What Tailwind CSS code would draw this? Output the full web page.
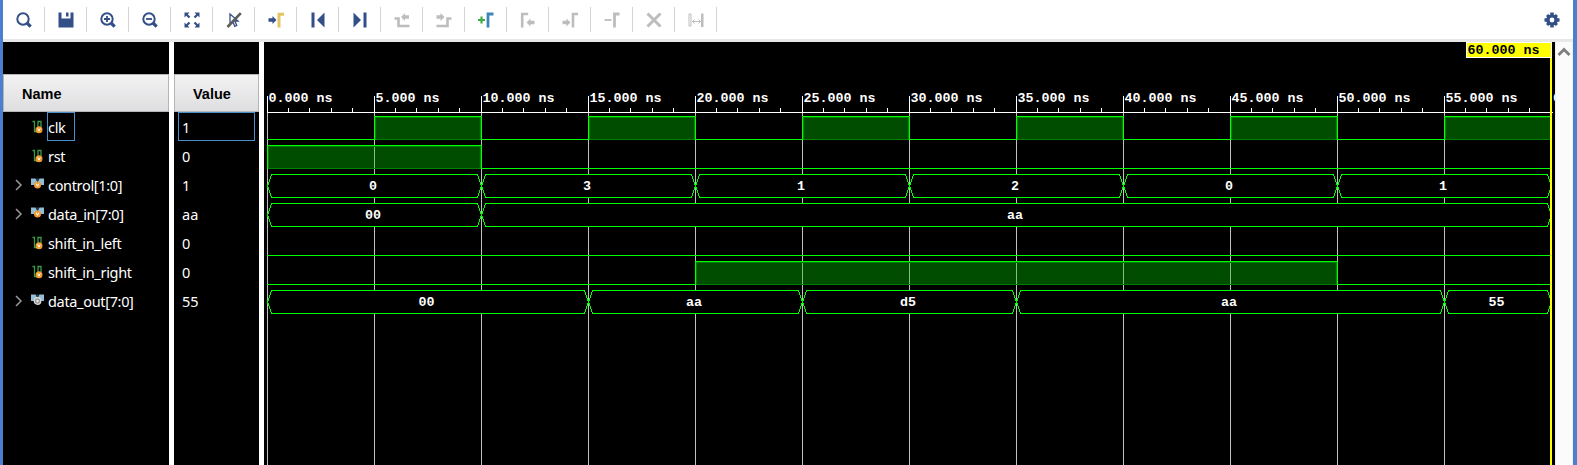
<!DOCTYPE html>
<html lang="en">
<head>
<meta charset="utf-8">
<title>Waveform</title>
<script src="https://cdn.jsdelivr.net/npm/@tailwindcss/browser@4"></script>
</head>
<body class="w-[1577px] h-[465px] overflow-hidden bg-white">
<div class="flex h-[465px] flex-col border-l-[3px] border-r-4 border-[#4a7fd0]">
  <header class="flex h-[42px] shrink-0 items-center border-b-[3px] border-[#e8e8e8] bg-white">
    <div id="tools" class="flex items-center"></div>
    <svg class="ml-auto mr-[13px]" width="16" height="16" viewBox="0 0 16 16"><g fill="#334f87"><circle cx="8" cy="8" r="5.8"/><path d="M6.300 .5h3.400v15H6.300zM.5 6.300h15v3.400H.5z"/><path d="M6.500 1h3v14h-3zM1 6.500h14v3H1z" transform="rotate(45 8 8)"/></g><circle cx="8" cy="8" r="2.4" fill="#fff"/></svg>
  </header>
  <main class="flex min-h-0 flex-1 bg-white font-['Noto_Sans',sans-serif] text-[14.5px] text-white">
    <section class="w-[166px] bg-black pt-8">
      <div class="flex h-[38px] items-center border border-[#b5b5b5] bg-linear-to-b from-[#f3f3f4] to-[#dedee0] pl-[18px] pt-[3px] font-['Liberation_Sans',sans-serif] text-[14.5px] font-bold text-black">Name</div>
      <div id="names" class="tracking-[-0.33px]"></div>
    </section>
    <section class="ml-[5px] w-[85px] bg-black pt-8">
      <div class="flex h-[38px] items-center border border-[#b5b5b5] bg-linear-to-b from-[#f3f3f4] to-[#dedee0] pl-[18px] pt-[3px] font-['Liberation_Sans',sans-serif] text-[14.5px] font-bold text-black">Value</div>
      <div id="values"></div>
    </section>
    <section class="ml-[5px] w-[1291px] bg-black">
      <svg id="wave" class="block font-['Liberation_Mono',monospace] text-[13.33px] font-bold" width="1291" height="423" viewBox="264 42 1291 423" shape-rendering="crispEdges"></svg>
    </section>
    <aside class="flex flex-1 justify-center border-x border-[#eee] bg-[#fbfbfb]">
      <svg class="mt-[5px]" width="14" height="10" viewBox="0 0 14 10"><path d="M1.500 8l5.500-5.500 5.500 5.500" fill="none" stroke="#7d7d7d" stroke-width="2.8"/></svg>
    </aside>
  </main>
</div>
<script>
const B = '#334f87', G = '#bdbdbd';
const arrow = (x, y, c) => `<path fill="${c}" d="M${x} ${y-1.8}h4v-2.2l4 4-4 4v-2.2h-4z"/>`;
const arrowL = (x, y, c) => `<path fill="${c}" d="M${x+8} ${y-1.8}h-4v-2.2l-4 4 4 4v-2.2h4z"/>`;
const lens = `<circle cx="7" cy="7" r="5.700" fill="none" stroke="${B}" stroke-width="2"/><path d="M11 11l3.700 3.700" stroke="${B}" stroke-width="3.200"/>`;
const tools = [
  lens,
  `<path fill="${B}" d="M.5 .5h3v6h9v-6h3v15H.5z"/><path fill="${B}" d="M8 .5h2.5v4H8z"/>`,
  lens + `<path d="M4 7h6M7 4v6" stroke="${B}" stroke-width="1.8"/>`,
  lens + `<path d="M4 7h6" stroke="${B}" stroke-width="1.8"/>`,
  `<path fill="${B}" d="M.5 .5h5l-1.700 1.700 2.500 2.500-1.600 1.600-2.500-2.500L.5 5.500zM15.500 .5h-5l1.700 1.700-2.500 2.500 1.600 1.600 2.500-2.500 1.700 1.700zM.5 15.500h5l-1.700-1.700 2.500-2.500-1.600-1.600-2.500 2.500-1.700-1.700zM15.500 15.500h-5l1.700-1.700-2.500-2.500 1.600-1.600 2.500 2.500 1.700-1.700z"/>`,
  `<path d="M4 2l8 7H8.800l2 4.500-2 .8-1.800-4.300L4 12z" fill="#fff" stroke="${B}" stroke-width="1.300"/><path d="M1.500 15L14.800 1.200" stroke="#5c5c5c" stroke-width="2.600"/>`,
  arrow(.5, 8, B) + `<path d="M11 15.500v-13.300h5" fill="none" stroke="#e3c565" stroke-width="3"/>`,
  `<path fill="${B}" d="M1.500 .5h3v15h-3zM14.500 .5v15L7 8z"/>`,
  `<path fill="${B}" d="M11.500 .5h3v15h-3zM1.500 .5v15L9 8z"/>`,
  `<path d="M.5 6.500h4v7.500h11" fill="none" stroke="${G}" stroke-width="2.600"/>` + arrowL(7, 5, G),
  `<path d="M15.500 6.500h-4v7.500H.5" fill="none" stroke="${G}" stroke-width="2.600"/>` + arrow(.5, 5, G),
  `<path d="M0 8h7M3.500 4.500v7" stroke="#41ae45" stroke-width="2.200"/><path d="M10 15.500v-13.500h5.500" fill="none" stroke="#3c86b8" stroke-width="2.800"/>`,
  `<path d="M2.200 15.500v-13.500h6" fill="none" stroke="${G}" stroke-width="2.600"/>` + arrowL(6.500, 10.500, G),
  arrow(.5, 10.500, G) + `<path d="M11 15.500v-13.500h5" fill="none" stroke="${G}" stroke-width="2.600"/>`,
  `<path d="M.5 8h7" stroke="${G}" stroke-width="1.800"/><path d="M10.500 15.500v-13.500h5" fill="none" stroke="${G}" stroke-width="2.800"/>`,
  `<path d="M1.500 1.500l13 13M14.500 1.500l-13 13" stroke="${G}" stroke-width="3"/>`,
  `<path d="M1 2h2v12H1z" fill="none" stroke="${G}"/><path d="M13 1.500h2.500v13.500H13z" fill="${G}"/><path d="M4.500 9.500h8M6.500 7.500l-2 2 2 2M10.500 7.500l2 2-2 2" fill="none" stroke="${G}"/>`
];
document.getElementById('tools').innerHTML = tools.map(t =>
  `<div class="flex h-[25px] w-[42px] items-center justify-center border-r border-[#d4d4d4]"><svg width="16" height="16" viewBox="0 0 16 16">${t}</svg></div>`).join('');

const badge = (x, y, out) => out
  ? `<circle cx="${x}" cy="${y}" r="3.300" fill="#999" stroke="#ddd" stroke-width="1.200"/><circle cx="${x}" cy="${y}" r="1.200" fill="#eee"/>`
  : `<circle cx="${x}" cy="${y}" r="3.500" fill="#f29a2e"/><path d="M${x-1.300} ${y-1.400}l1.300 2.800 1.300-2.800" fill="none" stroke="#fff"/>`;
const wire = `<path d="M1.500 1.500h2v10h3M7 8v-6.500h3v6" fill="none" stroke="#3c9a48" stroke-width="1.300"/>` + badge(8, 9.700);
const bus = out => `<path d="M0 .5h4.500l2 3.500L8.500 .5H13v6.500h-3L6.500 5 3 7H0z" fill="#92bdd6"/><path d="M4.500 .5h4L6.500 4z" fill="#2c3f49"/>` + badge(6.500, 7, out);
const signals = [
  ['clk', '1', 0], ['rst', '0', 0], ['control[1:0]', '1', 1], ['data_in[7:0]', 'aa', 1],
  ['shift_in_left', '0', 0], ['shift_in_right', '0', 0], ['data_out[7:0]', '55', 2]];
document.getElementById('names').innerHTML = signals.map(([n, v, k], i) =>
  `<div class="flex h-[29px] items-center pl-[11px]">
    <svg width="10" height="12" viewBox="0 0 10 12">${k ? '<path d="M2 1l5 5-5 5" fill="none" stroke="#999" stroke-width="1.500"/>' : ''}</svg>
    <svg class="ml-[7px]" width="14" height="14" viewBox="0 0 14 14">${k ? bus(k === 2) : wire}</svg>
    <span class="ml-[2px] flex h-[29px] items-center border pt-[2px] pr-[9px] ${i ? 'border-transparent' : 'border-[#4a90cc]'}">${n}</span></div>`).join('');
document.getElementById('values').innerHTML = signals.map(([n, v], i) =>
  `<div class="ml-1 mr-1 flex h-[29px] items-center border pl-[3px] pt-[2px] ${i ? 'border-transparent' : 'border-[#4a90cc]'}">${v}</div>`).join('');

const X = t => 267 + t * 21.4;
const rect = (x, y, w, h, c) => `<rect x="${x}" y="${y}" width="${w}" height="${h}" fill="${c}"/>`;
const L = '#00ff00';
let s = '';
for (let i = 0; i < 12; i++) s += rect(267 + 107 * i, 113, 1, 352, '#c0c0c0');
const drawBit = (y, segs) => {
  segs.forEach(([a, b, hi]) => {
    const x = Math.round(X(a)), w = Math.round(X(b)) - x;
    if (hi) {
      s += rect(x, y, w, 24, '#004d00');
      for (let t = a + 5; t < b; t += 5) s += rect(Math.round(X(t)), y, 1, 24, '#80c080');
      s += `<rect x="${x + 1.5}" y="${y + 1.500}" width="${w - 2}" height="22" fill="none" stroke="#008000"/>`;
      s += rect(x, y, w, 1, L) + rect(x, y, 1, 24, L);
      if (b < 60) s += rect(x + w, y, 1, 24, L);
    } else s += rect(x, y + 23, w + 1, 1, L);
  });
};
const drawBus = (y, segs) => {
  segs.forEach(([a, b, v]) => {
    const x = Math.round(X(a)) + .5, e = Math.round(X(b)) + .5;
    s += `<path d="M${x} ${y + 12}L${x + 4} ${y + .5}H${e - 4}L${e} ${y + 12}L${e - 4} ${y + 23.500}H${x + 4}Z" fill="#000" stroke="${L}"/>`;
    s += `<text x="${(x + e) / 2 - 1.500}" y="${y + 16}" text-anchor="middle" fill="#fff">${v}</text>`;
  });
};
drawBit(116, [...Array(12)].map((_, i) => [i * 5, i * 5 + 5, i % 2]));
drawBit(145, [[0, 10, 1], [10, 60, 0]]);
drawBus(174, [[0, 10, '0'], [10, 20, '3'], [20, 30, '1'], [30, 40, '2'], [40, 50, '0'], [50, 60, '1']]);
drawBus(203, [[0, 10, '00'], [10, 60, 'aa']]);
drawBit(232, [[0, 60, 0]]);
drawBit(261, [[0, 20, 0], [20, 50, 1], [50, 60, 0]]);
drawBus(290, [[0, 15, '00'], [15, 25, 'aa'], [25, 35, 'd5'], [35, 55, 'aa'], [55, 60, '55']]);
s += rect(267, 112, 1286, 1, '#fff');
for (let i = 0; i < 60; i++) {
  const x = Math.floor(X(i) + .01);
  s += i % 5 ? rect(x, 108, 1, 4, '#fff') : rect(x, 96, 1, 17, '#fff') + `<text x="${x + 1.500}" y="102" fill="#fff">${i}.000 ns</text>`;
}
s += `<text x="1553" y="102" fill="#fff">60.000 ns</text>`;
s += rect(1550, 42, 2, 423, '#ff0');
s += rect(1466, 42, 86, 16, '#fff') + rect(1467, 43, 84, 14, '#ff0') + `<text x="1467.500" y="54" fill="#000">60.000 ns</text>`;
document.getElementById('wave').innerHTML = s;
</script>
</body>
</html>
